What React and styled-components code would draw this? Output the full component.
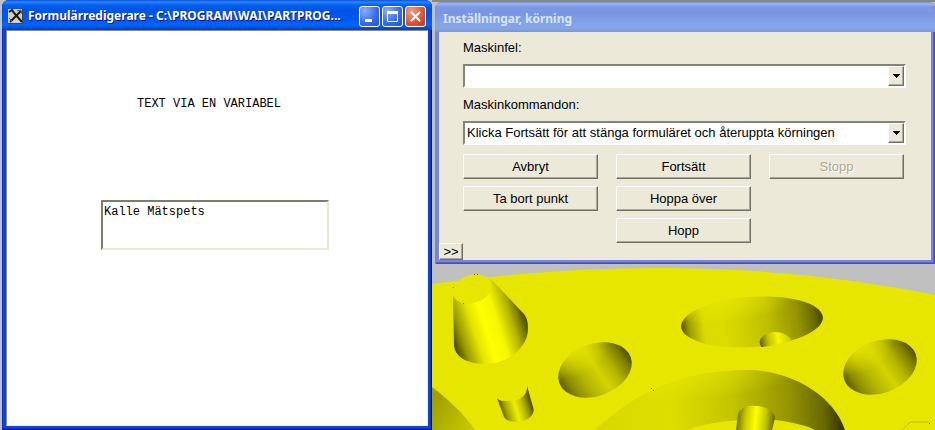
import { useState } from "react";
import styled, { createGlobalStyle, css } from "styled-components";

const GlobalStyle = createGlobalStyle`
  * {
    box-sizing: border-box;
  }
  body {
    margin: 0;
    background: #c0c0c0;
    font-family: "Liberation Sans", Arial, sans-serif;
    font-size: 13px;
    color: #000;
  }
`;

const Desktop = styled.main`
  display: grid;
  grid-template-columns: minmax(0, 432fr) minmax(0, 503fr);
  min-height: 100vh;
  overflow: hidden;
`;

const FormWindow = styled.section`
  display: flex;
  flex-direction: column;
  margin-left: 2px;
  padding: 0 4px 4px;
  border-radius: 7px 7px 0 0;
  background: #0a46dc;
  box-shadow: inset 1px 0 #0831d9, inset -1px -1px #00138c, inset -2px -2px #0732c4;
`;

const TitleBar = styled.header`
  display: flex;
  align-items: center;
  gap: 5px;
  height: 30px;
  margin: 0 -4px;
  padding: 2px 6px 0;
  border-radius: 7px 7px 0 0;
  background: linear-gradient(#0a50d8 0, #2a86fa 2px, #0460ee 5px, #0054e4 10px, #0058ee 20px, #0266fc 25px, #0048cc 29px, #003cb4);
`;

const Title = styled.h1`
  flex: 1;
  min-width: 0;
  margin: 0;
  overflow: hidden;
  white-space: nowrap;
  font: 700 12px/18px "Noto Sans", "Trebuchet MS", sans-serif;
  color: ${(props) => (props.$inactive ? "#d8e4f8" : "#fff")};
  text-shadow: ${(props) => (props.$inactive ? "none" : "1px 1px #0f1089")};
`;

const Controls = styled.div`
  display: flex;
  gap: 2px;
`;

const ControlButton = styled.button`
  display: grid;
  place-items: center;
  width: 21px;
  height: 21px;
  padding: 0;
  border: 1px solid #fff;
  border-radius: 3px;
  background: ${(props) =>
    props.$close
      ? "radial-gradient(circle at 30% 25%, #f0a088, #e0502c 60%, #c03c18)"
      : "radial-gradient(circle at 25% 20%, #8caef8, #3c6cf0 55%, #1c50d8)"};
`;

const Canvas = styled.div`
  flex: 1;
  display: flex;
  flex-direction: column;
  align-items: flex-start;
  gap: 88px;
  padding: 65px 94px 0;
  border: 1px solid #f4f4ee;
  border-top-color: #8c8c80;
  border-left-color: #8c8c80;
  background: #fff;
  font: 12px/16px "Liberation Mono", "Courier New", monospace;
`;

const CanvasLabel = styled.label`
  padding-left: 36px;
`;

const CanvasInput = styled.textarea`
  display: block;
  width: 100%;
  max-width: 228px;
  height: 50px;
  padding: 2px 1px;
  border: 2px solid;
  border-color: #7c7c70 #ece9d8 #ece9d8 #7c7c70;
  outline: none;
  resize: none;
  background: #fff;
  color: #000;
  font: inherit;
`;

const Side = styled.div`
  display: flex;
  flex-direction: column;
  min-width: 0;
  border-top: 2px solid #858a78;
`;

const Dialog = styled.section`
  margin-left: 3px;
  padding: 0 4px 4px;
  border-radius: 7px 7px 0 0;
  background: #7686dc;
  box-shadow: inset 1px 0 #8080c4, inset -1px -1px #4c4cb8, inset -2px -2px #5660d0;
`;

const DialogTitle = styled(TitleBar)`
  padding: 4px 8px 0;
  background: linear-gradient(#7c94e0 0, #9cb4f4 2px, #7c98e4 5px, #7b96e1 12px, #82a6ea 22px, #82a4e8 27px, #7894e0);
`;

const DialogBody = styled.div`
  background: #ece9d8;
`;

const Fields = styled.form`
  padding: 8px 25px 0 24px;
`;

const Field = styled.div`
  display: flex;
  flex-direction: column;
  gap: 8px;
  margin-bottom: 9px;
  line-height: 16px;
`;

const SelectBox = styled.div`
  position: relative;
  height: 24px;
  border: 2px solid;
  border-color: #848478 #fff #fff #848478;
  background: #fff;
`;

const Select = styled.select`
  appearance: none;
  display: block;
  width: 100%;
  height: 20px;
  padding: 0 20px 0 2px;
  border: 0;
  outline: none;
  background: #fff;
  color: #000;
  font: inherit;
`;

const raised = css`
  border: 1px solid;
  border-color: #fff #716f64 #716f64 #fff;
  box-shadow: inset -1px -1px #aca899;
  background: #ece9d8;
`;

const Arrow = styled.span`
  ${raised}
  position: absolute;
  top: 0;
  right: 0;
  bottom: 0;
  display: grid;
  place-items: center;
  width: 16px;
  pointer-events: none;
`;

const ButtonGrid = styled.div`
  display: grid;
  grid-template-columns: repeat(3, minmax(0, 1fr));
  gap: 7px 18px;
  padding-right: 2px;
`;

const Button = styled.button`
  ${raised}
  grid-column: ${(props) => props.$col};
  height: 25px;
  padding: 0;
  color: #000;
  font: inherit;

  &:disabled {
    color: #aca899;
    text-shadow: 1px 1px #fff;
  }
`;

const MoreButton = styled.button`
  ${raised}
  display: block;
  width: 24px;
  height: 17px;
  padding: 0;
  color: #000;
  font: inherit;
  line-height: 14px;
`;

const View = styled.svg`
  flex: 1;
  display: block;
  width: 100%;
  min-height: 0;
  height: 166px;
`;

const buttons = [
  { text: "Avbryt", col: 1 },
  { text: "Fortsätt", col: 2 },
  { text: "Stopp", col: 3, disabled: true },
  { text: "Ta bort punkt", col: 1 },
  { text: "Hoppa över", col: 2 },
  { text: "Hopp", col: 2 },
];

function ToolIcon() {
  return (
    <svg width="15" height="15" viewBox="0 0 15 15" aria-hidden="true">
      <rect width="15" height="15" fill="#d4d0c0" />
      <path d="M1 3 L4 1 L6 4 L14 13 M13 2 L8 7 L2 13" stroke="#181818" strokeWidth="2" fill="none" />
      <path d="M9 2 L13 1 L14 5 M1 9 L4 12" stroke="#555" fill="none" />
      <path d="M0 14.5 H15 M14.5 0 V15" stroke="#444" />
    </svg>
  );
}

function Dropdown({ id, label, options }) {
  return (
    <Field>
      <label htmlFor={id}>{label}</label>
      <SelectBox>
        <Select id={id}>
          {options.map((option) => (
            <option key={option}>{option}</option>
          ))}
        </Select>
        <Arrow>
          <svg width="7" height="4" viewBox="0 0 7 4" shapeRendering="crispEdges">
            <path d="M0 0 H7 L3.5 4 Z" />
          </svg>
        </Arrow>
      </SelectBox>
    </Field>
  );
}

function Shade({ id, from, to, stops }) {
  return (
    <linearGradient id={id} gradientUnits="userSpaceOnUse" x1={from[0]} y1={from[1]} x2={to[0]} y2={to[1]}>
      {stops.map(([offset, color]) => (
        <stop key={offset} offset={offset} stopColor={color} />
      ))}
    </linearGradient>
  );
}

const holeStops = [[0, "#5c5c00"], [0.12, "#8c8c00"], [0.3, "#b4b400"], [0.52, "#d4d400"], [0.7, "#b4b400"], [0.88, "#7c7c00"], [1, "#484800"]];

// hole wall, melting into the surface at its upper left edge
function Hole({ cx, cy }) {
  const turn = `rotate(-20 ${cx} ${cy})`;
  return (
    <g>
      <ellipse cx={cx} cy={cy} rx="38" ry="26" transform={turn} fill={cx < 300 ? "url(#holeA)" : "url(#holeB)"} />
      <ellipse cx={cx} cy={cy} rx="38" ry="26" transform={turn} fill="url(#melt)" />
    </g>
  );
}

function PartView() {
  return (
    <View viewBox="0 0 503 166" preserveAspectRatio="xMidYMid slice" role="img" aria-label="3D">
      <defs>
        <Shade id="cone" from={[20, 74]} to={[94, 50]} stops={[[0, "#4c4c00"], [0.12, "#989800"], [0.3, "#e4e400"], [0.45, "#ffff00"], [0.62, "#f6f600"], [0.8, "#b4b400"], [1, "#404000"]]} />
        <Shade id="pin" from={[67, 148]} to={[100, 138]} stops={[[0, "#484800"], [0.25, "#acac00"], [0.5, "#f0f000"], [0.75, "#b0b000"], [1, "#484800"]]} />
        <Shade id="holeA" from={[127, 116]} to={[200, 96]} stops={holeStops} />
        <Shade id="holeB" from={[412, 113]} to={[485, 93]} stops={holeStops} />
        <radialGradient id="melt" cx="0.3" cy="0" r="0.5">
          <stop offset="0" stopColor="#e6e600" stopOpacity="0.9" />
          <stop offset="1" stopColor="#e6e600" stopOpacity="0" />
        </radialGradient>
        <Shade id="bowl" from={[249, 62]} to={[391, 52]} stops={[[0, "#545400"], [0.06, "#a0a000"], [0.16, "#dada00"], [0.3, "#dcdc00"], [0.6, "#c0c000"], [0.82, "#949400"], [0.94, "#686800"], [1, "#404000"]]} />
        <Shade id="ball" from={[327, 78]} to={[359, 72]} stops={[[0, "#585800"], [0.3, "#c4c400"], [0.6, "#f8f800"], [1, "#c8c800"]]} />
        <Shade id="big" from={[165, 166]} to={[412, 152]} stops={[[0, "#d8d800"], [0.3, "#dede00"], [0.55, "#c4c400"], [0.78, "#949400"], [0.92, "#686800"], [1, "#303000"]]} />
        <Shade id="post" from={[304, 154]} to={[343, 158]} stops={[[0, "#686800"], [0.25, "#cccc00"], [0.5, "#ffff00"], [0.75, "#c8c800"], [1, "#606000"]]} />
        <Shade id="corner" from={[0, 140]} to={[38, 166]} stops={[[0, "#a0a000"], [1, "#c8c800"]]} />
      </defs>
      <rect width="503" height="166" fill="#c0c0c0" />
      <path d="M0 20 C80 9 160 3 240 4 C340 5 430 16 503 31 V166 H0 Z" fill="#e6e600" />

      {/* cone */}
      <path d="M21 30 L22 82 C24 95 38 100 55 100 C78 99 96 82 96 65 C96 58 95 53 91 49 L59 15 Z" fill="url(#cone)" />
      <ellipse cx="40" cy="25" rx="20" ry="14" transform="rotate(-18 40 25)" fill="#e6e600" />
      <path d="M21 24 l1 -3 M42 10.5 h6 M31 39.5 h2" stroke="#686800" strokeDasharray="1 2" />

      {/* pin */}
      <path d="M65 134 L72 153 C76 159 87 159 94 156 C100 153 103 148 101 143 L95 122 C96 131 88 137 78 137 C71 137 67 137 65 134 Z" fill="url(#pin)" />
      <path d="M0 123 C16 135 31 149 43 166 H0 Z" fill="url(#corner)" />

      {/* holes */}
      <Hole cx={163} cy={106} />
      <Hole cx={448} cy={103} />
      <ellipse cx="320" cy="58" rx="71" ry="25" transform="rotate(-4 320 58)" fill="url(#bowl)" />
      <ellipse cx="320" cy="58" rx="71" ry="25" transform="rotate(-4 320 58)" fill="url(#melt)" />
      <path d="M328 80 C326 73 335 68 343 68 C350 68 356 71 360 76 C350 80 340 82 329 83 Z" fill="url(#ball)" />

      <path d="M163 166 C185 146 230 106 316 106 C355 106 400 128 413 166 Z" fill="url(#big)" />
      <path d="M163 166 C185 146 230 106 316 106 C355 106 400 128 413 166 Z" fill="url(#melt)" />
      <path d="M255 166 C275 158 310 154 343 156 C360 158 373 161 383 166 Z" fill="#e6e600" />
      <path d="M304 166 L306 150 C308 144 316 141 323 142 C334 142 343 148 343 154 L340 166 Z" fill="url(#post)" />

      <path d="M471 165 L478 158 H497" stroke="#b8b800" fill="none" />
      <path d="M219 124.5 h1 M221 126.5 h1 M497 159.5 h1" stroke="#404000" />
    </View>
  );
}

function App() {
  const [value, setValue] = useState("Kalle Mätspets");

  return (
    <>
      <GlobalStyle />
      <Desktop>
        <FormWindow>
          <TitleBar>
            <ToolIcon />
            <Title>Formulärredigerare - C:\PROGRAM\WAI\PARTPROG...</Title>
            <Controls>
              <ControlButton aria-label="Minimera">
                <svg width="17" height="17">
                  <path d="M4 12.5 H11" stroke="#fff" strokeWidth="3" />
                </svg>
              </ControlButton>
              <ControlButton aria-label="Maximera">
                <svg width="17" height="17" fill="none" stroke="#fff">
                  <path d="M3.5 4 V13.5 H13.5 V4" />
                  <path d="M3 4.5 H14" strokeWidth="3" />
                </svg>
              </ControlButton>
              <ControlButton $close aria-label="Stäng">
                <svg width="17" height="17">
                  <path d="M4 4 L13 13 M13 4 L4 13" stroke="#fff" strokeWidth="2" />
                </svg>
              </ControlButton>
            </Controls>
          </TitleBar>
          <Canvas>
            <CanvasLabel htmlFor="variabel">TEXT VIA EN VARIABEL</CanvasLabel>
            <CanvasInput id="variabel" spellCheck={false} value={value} onChange={(e) => setValue(e.target.value)} />
          </Canvas>
        </FormWindow>

        <Side>
          <Dialog>
            <DialogTitle>
              <Title as="h2" $inactive>
                Inställningar, körning
              </Title>
            </DialogTitle>
            <DialogBody>
              <Fields>
                <Dropdown id="fel" label="Maskinfel:" options={[""]} />
                <Dropdown
                  id="kommandon"
                  label="Maskinkommandon:"
                  options={["Klicka Fortsätt för att stänga formuläret och återuppta körningen"]}
                />
                <ButtonGrid>
                  {buttons.map((b) => (
                    <Button key={b.text} type="button" $col={b.col} disabled={b.disabled}>
                      {b.text}
                    </Button>
                  ))}
                </ButtonGrid>
              </Fields>
              <MoreButton type="button">&gt;&gt;</MoreButton>
            </DialogBody>
          </Dialog>
          <PartView />
        </Side>
      </Desktop>
    </>
  );
}

export default App;
